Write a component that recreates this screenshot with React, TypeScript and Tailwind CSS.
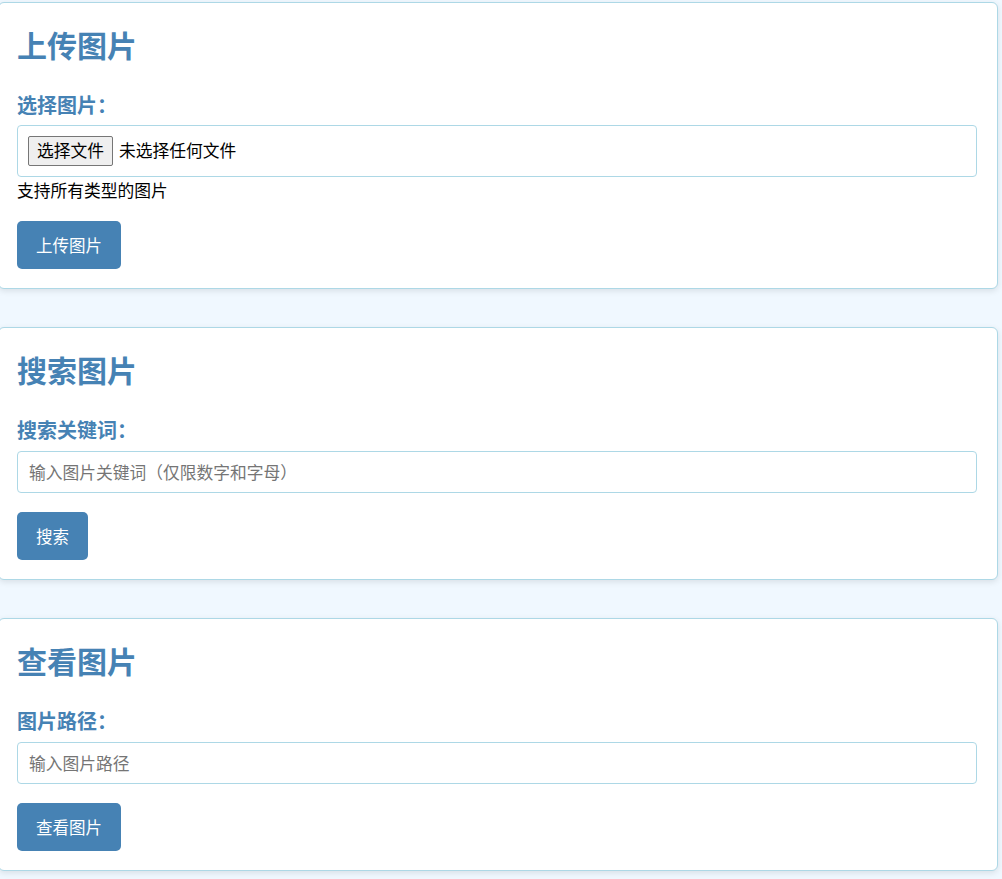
import { useState } from 'react';

const font = { fontFamily: '"Noto Sans CJK SC", "Noto Sans", sans-serif' };

function Card({ title, children }: { title: string; children: React.ReactNode }) {
  return (
    <div className="ml-[-2px] mb-[38px] w-[1000px] rounded-[6px] border border-[#add8e6] bg-white pt-[23px] pb-[19px] pl-[18px] pr-[20px] shadow-[0_2px_6px_rgba(0,0,0,0.1)]">
      <h2 className="mb-[31px] text-[30px] leading-[36px] font-bold text-[#4682b4]">{title}</h2>
      {children}
    </div>
  );
}

function Label({ text, className = '' }: { text: string; className?: string }) {
  return (
    <label className={`block text-[20px] leading-[24px] font-bold text-[#4682b4] ${className}`}>{text}</label>
  );
}

function Button({ text }: { text: string }) {
  return (
    <button className="mt-[19px] flex h-[48px] items-center rounded-[5px] bg-[#4682b4] px-[19px] text-[16.5px] text-white">
      {text}
    </button>
  );
}

export default function App() {
  const [keyword, setKeyword] = useState('');
  const [path, setPath] = useState('');

  return (
    <div className="min-h-[879px] overflow-hidden bg-[#f0f8ff] pt-[2px] text-black" style={font}>
      {/* 上传 */}
      <Card title="上传图片">
        <Label text="选择图片：" className="mb-[8px]" />
        <div className="flex h-[52px] items-center rounded-[4px] border border-[#add8e6] px-[10px]">
          <span className="flex h-[30px] items-center rounded-[2px] border border-[#767676] bg-[#efefef] px-[8px] text-[16.75px]">
            选择文件
          </span>
          <span className="ml-[6px] text-[16.75px]">未选择任何文件</span>
        </div>
        <p className="mt-[1px] text-[16.75px] leading-[24px]">支持所有类型的图片</p>
        <Button text="上传图片" />
      </Card>

      {/* 搜索 */}
      <Card title="搜索图片">
        <Label text="搜索关键词：" className="mb-[9px]" />
        <input
          value={keyword}
          onChange={(e) => setKeyword(e.target.value)}
          placeholder="输入图片关键词（仅限数字和字母）"
          className="block h-[42px] w-full rounded-[4px] border border-[#add8e6] px-[11px] text-[16.75px] outline-none placeholder:text-[#757575]"
        />
        <Button text="搜索" />
      </Card>

      {/* 查看 */}
      <Card title="查看图片">
        <Label text="图片路径：" className="mb-[9px]" />
        <input
          value={path}
          onChange={(e) => setPath(e.target.value)}
          placeholder="输入图片路径"
          className="block h-[42px] w-full rounded-[4px] border border-[#add8e6] px-[11px] text-[16.75px] outline-none placeholder:text-[#757575]"
        />
        <Button text="查看图片" />
      </Card>
    </div>
  );
}
